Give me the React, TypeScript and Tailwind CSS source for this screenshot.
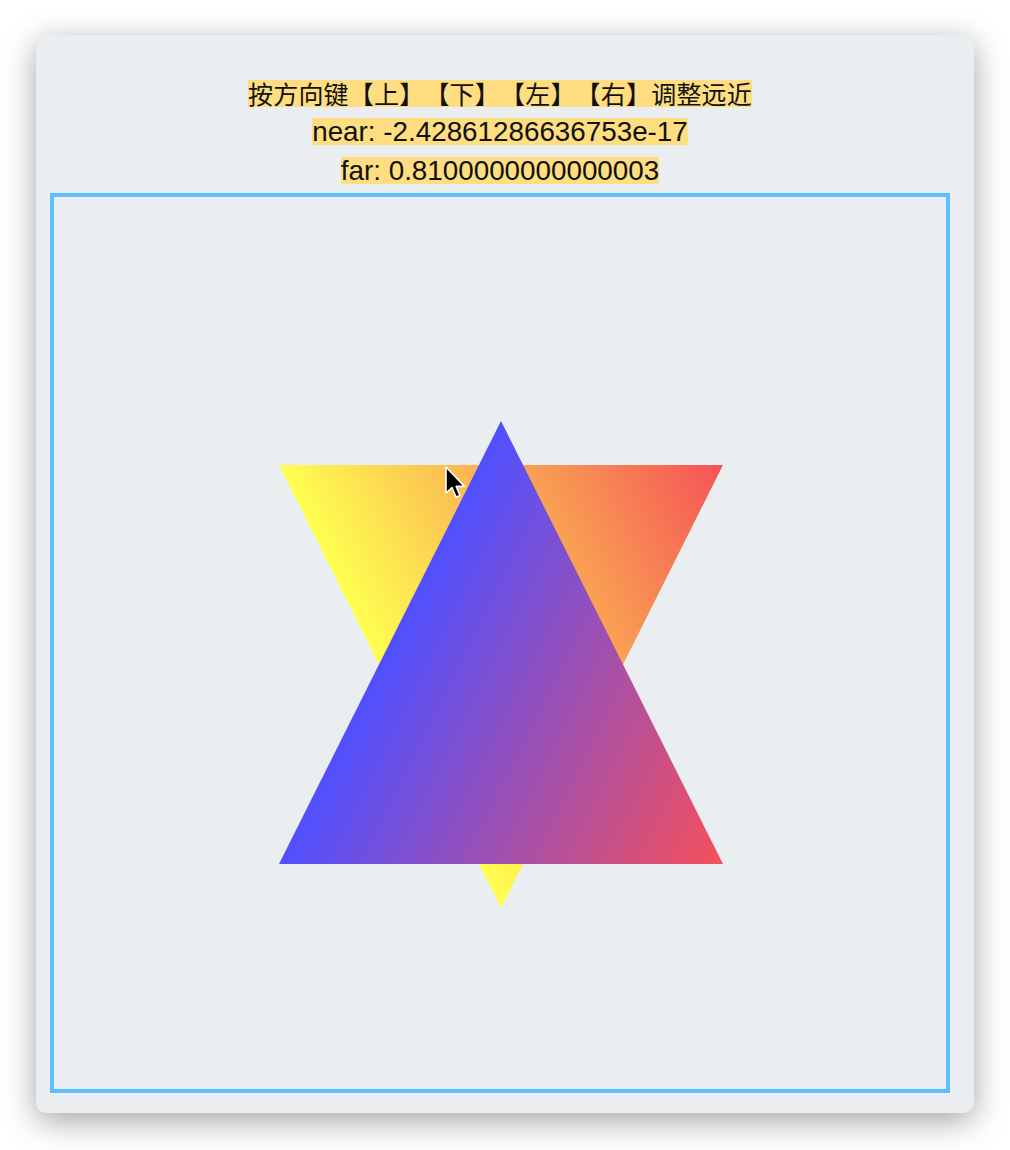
import React from "react";

const latin = { fontFamily: '"Liberation Sans", "Noto Sans CJK SC", sans-serif' };
const cjk = { fontFamily: '"Noto Sans CJK SC", "Liberation Sans", sans-serif' };

function Line({ text, className, style }: { text: string; className: string; style: React.CSSProperties }) {
  return (
    <div className={`h-[27px] flex justify-center ${className}`}>
      <span
        className="inline-block h-[27px] bg-[#fede80] text-[#111] whitespace-nowrap"
        style={style}
      >
        {text}
      </span>
    </div>
  );
}

function Scene() {
  // viewBox uses page coordinates so points read straight off the layout
  return (
    <svg className="block" width="892" height="892" viewBox="54 196 892 892">
      <defs>
        <linearGradient id="down" gradientUnits="userSpaceOnUse" x1="368" y1="642" x2="723" y2="464">
          <stop offset="0" stopColor="#ffff50" />
          <stop offset="1" stopColor="#f55356" />
        </linearGradient>
        <linearGradient id="up" gradientUnits="userSpaceOnUse" x1="368" y1="685" x2="723" y2="863">
          <stop offset="0" stopColor="#5050ff" />
          <stop offset="1" stopColor="#f5505a" />
        </linearGradient>
      </defs>
      <polygon points="279,464 723,464 501,907" fill="url(#down)" />
      <polygon points="501,420 723,863 279,863" fill="url(#up)" />
      <path
        transform="translate(446 466)"
        d="M0 0 L0 26 L6 20.5 L10 30 L14 28.4 L10.2 19.4 L18.5 19.4 Z"
        fill="#000"
        stroke="#fff"
        strokeWidth="1.6"
        strokeLinejoin="round"
      />
    </svg>
  );
}

export default function App() {
  return (
    <div className="w-[1010px] h-[1150px] bg-white pt-[35px] pl-[36px]">
      <div className="w-[938px] h-[1078px] rounded-[10px] bg-[#ebeef1] shadow-[0_8px_32px_rgba(0,0,0,0.36)] pl-[14px] pr-[24px] pt-[45px] flex flex-col items-center">
        <Line
          text="按方向键【上】【下】【左】【右】调整远近"
          className=""
          style={{ ...cjk, fontSize: 25, lineHeight: "27px", letterSpacing: "0.2px", textSpacingTrim: "space-all" } as React.CSSProperties}
        />
        <Line
          text="near: -2.42861286636753e-17"
          className="mt-[11px]"
          style={{ ...latin, fontSize: 27.8, lineHeight: "27px" }}
        />
        <Line
          text="far: 0.8100000000000003"
          className="mt-[12px]"
          style={{ ...latin, fontSize: 27.8, lineHeight: "27px" }}
        />
        <div className="mt-[9px] w-[900px] h-[900px] border-[4px] border-[#5cbfff]">
          <Scene />
        </div>
      </div>
    </div>
  );
}
